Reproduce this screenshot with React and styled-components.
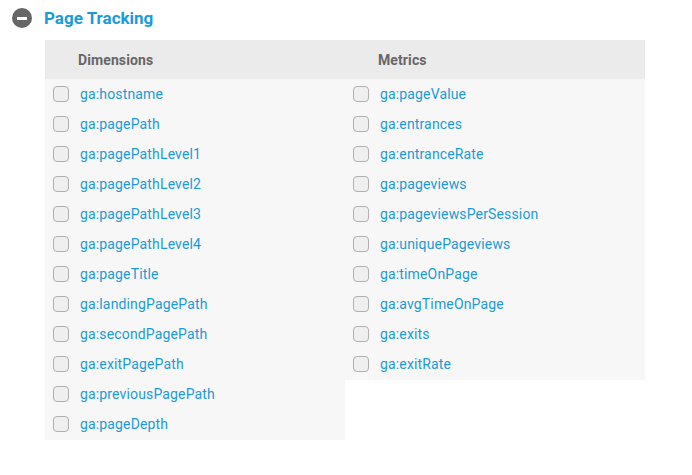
import React from "react";
import styled, { createGlobalStyle } from "styled-components";

const Global = createGlobalStyle`
  body {
    margin: 0;
    background: #fff;
    font-family: Roboto, "Liberation Sans", sans-serif;
  }
`;

const dimensions = [
  "ga:hostname",
  "ga:pagePath",
  "ga:pagePathLevel1",
  "ga:pagePathLevel2",
  "ga:pagePathLevel3",
  "ga:pagePathLevel4",
  "ga:pageTitle",
  "ga:landingPagePath",
  "ga:secondPagePath",
  "ga:exitPagePath",
  "ga:previousPagePath",
  "ga:pageDepth",
];

const metrics = [
  "ga:pageValue",
  "ga:entrances",
  "ga:entranceRate",
  "ga:pageviews",
  "ga:pageviewsPerSession",
  "ga:uniquePageviews",
  "ga:timeOnPage",
  "ga:avgTimeOnPage",
  "ga:exits",
  "ga:exitRate",
];

export default function App() {
  return (
    <Page>
      <Global />
      <Title>
        <Toggle />
        <span>Page Tracking</span>
      </Title>
      <Table>
        <Column>
          <Head>Dimensions</Head>
          {dimensions.map((d) => (
            <Row key={d}>
              <Box />
              <Label>{d}</Label>
            </Row>
          ))}
        </Column>
        <Column>
          <Head>Metrics</Head>
          {metrics.map((m) => (
            <Row key={m}>
              <Box />
              <Label>{m}</Label>
            </Row>
          ))}
        </Column>
      </Table>
    </Page>
  );
}

const Page = styled.div`
  padding: 8px 0 0 12px;
`;

const Title = styled.div`
  display: flex;
  align-items: center;
  gap: 12px;
  height: 20px;
  font-size: 17px;
  font-weight: 700;
  color: #1b9ad7;
`;

const Toggle = styled.span`
  position: relative;
  width: 20px;
  height: 20px;
  border-radius: 50%;
  background: #666;
  &:after {
    content: "";
    position: absolute;
    left: 5px;
    top: 8.5px;
    width: 10px;
    height: 3px;
    background: #fff;
  }
`;

const Table = styled.div`
  display: flex;
  align-items: flex-start;
  margin: 12px 0 0 33px;
  width: 600px;
`;

const Column = styled.div`
  width: 300px;
  background: #f7f7f7;
  padding-bottom: 1px;
`;

const Head = styled.div`
  height: 39px;
  display: flex;
  align-items: center;
  padding-left: 33px;
  background: #ebebeb;
  font-size: 14px;
  font-weight: 700;
  letter-spacing: 0.1px;
  color: #666;
`;

const Row = styled.div`
  height: 30px;
  display: flex;
  align-items: center;
  padding-left: 8px;
  gap: 11px;
`;

const Box = styled.span`
  width: 16px;
  height: 16px;
  box-sizing: border-box;
  border: 1px solid #b0b0b0;
  border-radius: 4px;
  background: #efefef;
`;

const Label = styled.span`
  font-size: 14px;
  letter-spacing: 0.15px;
  color: #1b9ad7;
`;
